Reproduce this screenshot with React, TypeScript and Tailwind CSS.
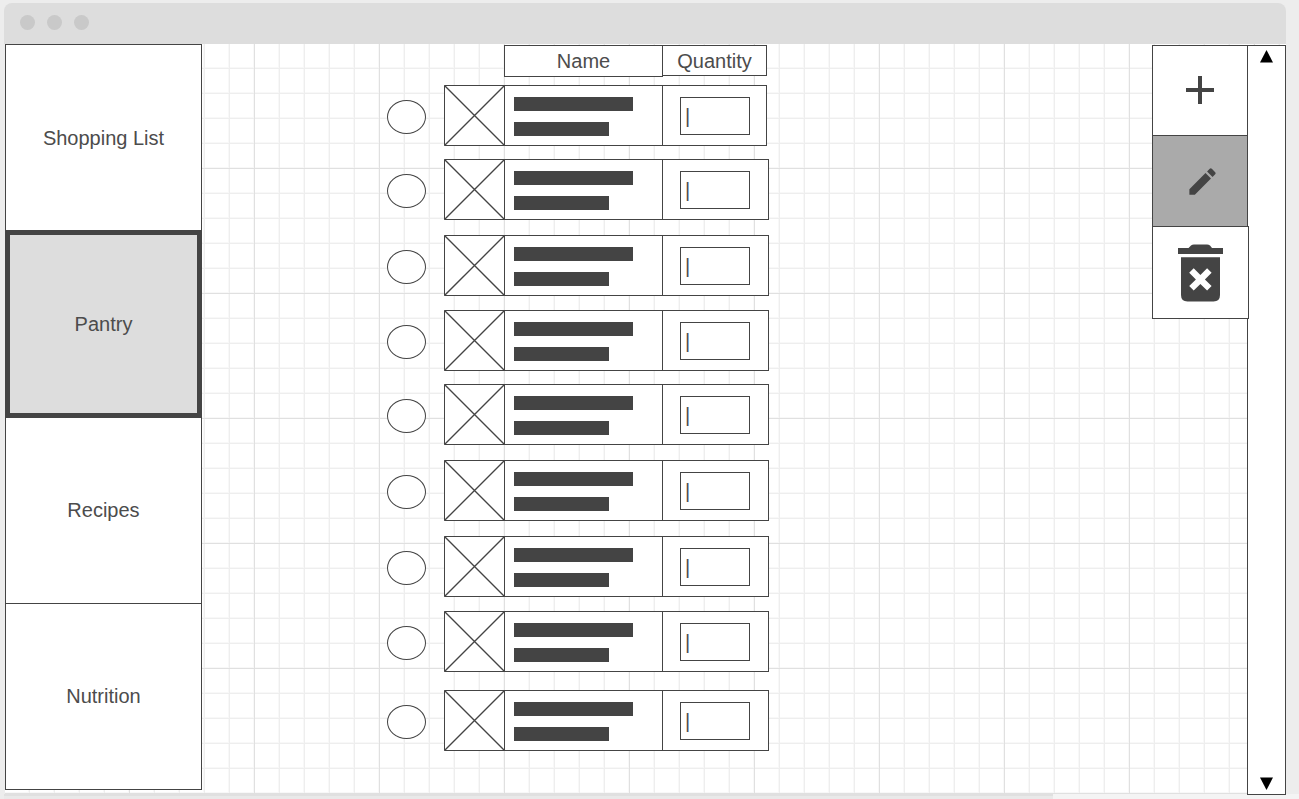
import { MdAdd, MdEdit } from "react-icons/md";

const navItems = ["Shopping List", "Pantry", "Recipes", "Nutrition"];

const rowSpacing = [
  "mt-2",
  "mt-[13px]",
  "mt-[15px]",
  "mt-[14px]",
  "mt-[13px]",
  "mt-[15px]",
  "mt-[15px]",
  "mt-[14px]",
  "mt-[18px]",
];

function TitleBar() {
  return (
    <header className="-ml-px flex h-[41px] items-center gap-3 rounded-t-lg bg-[#ddd] pb-[2px] pl-4">
      <span className="size-[15px] rounded-full bg-[#c9c9c9]" />
      <span className="size-[15px] rounded-full bg-[#c9c9c9]" />
      <span className="size-[15px] rounded-full bg-[#c9c9c9]" />
    </header>
  );
}

function Sidebar() {
  return (
    <nav className="mb-1 grid w-[197px] auto-rows-fr border-b border-[#444]">
      {navItems.map((item) => (
        <button
          key={item}
          type="button"
          className={
            item === "Pantry"
              ? "z-10 -mb-px border-5 border-[#444] bg-[#ddd]"
              : "-mb-px border border-[#444] bg-white"
          }
        >
          {item}
        </button>
      ))}
    </nav>
  );
}

function ImagePlaceholder() {
  return (
    <svg viewBox="0 0 61 61" className="size-[61px] bg-white" fill="none" stroke="#444" aria-hidden="true">
      <path d="M.5.5h60v60H.5z" />
      <path d="M.5.5l60 60M60.5.5l-60 60" strokeWidth="1.4" />
    </svg>
  );
}

function PantryTable() {
  return (
    <table className="ml-[185px] block self-start">
      <thead className="block">
        <tr className="flex items-start pt-px pl-[117px]">
          <th className="h-8 w-[159px] border border-[#444] bg-white text-center leading-[31px] font-normal">Name</th>
          <th className="-ml-px h-[31px] w-[105px] border border-[#444] bg-white text-center leading-[31px] font-normal">
            Quantity
          </th>
        </tr>
      </thead>
      <tbody className="flex flex-col">
        {rowSpacing.map((spacing, i) => (
          <tr key={i} className={`flex h-[61px] ${spacing}`}>
            <td className="w-[57px] pt-[15px]">
              <input
                type="checkbox"
                aria-label={`Select item ${i + 1}`}
                className="block h-[34px] w-[39px] appearance-none rounded-[50%] border border-[#444] bg-white checked:bg-[#aaa]"
              />
            </td>
            <td className="w-[61px]">
              <ImagePlaceholder />
            </td>
            <td className="-ml-px flex w-[159px] flex-col gap-[11px] border border-[#444] bg-white pt-[11px] pl-[9px]">
              <span className="h-[14px] w-[119px] bg-[#444]" />
              <span className="h-[14px] w-[95px] bg-[#444]" />
            </td>
            <td
              className={
                i === 0
                  ? "-ml-px w-[105px] border border-[#444] bg-white pt-[11px] pl-[17px]"
                  : "-ml-px w-[107px] border border-[#444] bg-white pt-[11px] pl-[17px]"
              }
            >
              <input
                type="text"
                defaultValue="|"
                aria-label={`Quantity of item ${i + 1}`}
                className="block h-[38px] w-[70px] border border-[#444] bg-white pl-1"
              />
            </td>
          </tr>
        ))}
      </tbody>
    </table>
  );
}

function TrashIcon() {
  return (
    <svg viewBox="0 0 45 58" className="h-[58px] w-[45px]" fill="#444" aria-hidden="true">
      <path d="M0 4h10.500l2.500-2.400Q14.200 0.500 16 0.500h13q1.800 0 3 1.100L34 4h11v6H0z" />
      <path
        fillRule="evenodd"
        d="M3 13.300h39V51q0 6.500-6.500 6.500h-26Q3 57.500 3 51zM15.700 24.200l-4.500 4.500 6.700 6.700-6.700 6.700 4.500 4.500 6.700-6.700 6.700 6.700 4.500-4.500-6.700-6.700 6.700-6.700-4.500-4.500-6.700 6.700z"
      />
    </svg>
  );
}

function Toolbar() {
  return (
    <div className="mt-px ml-auto flex w-24 flex-col self-start text-[#444]">
      <button
        type="button"
        aria-label="Add item"
        className="flex h-[91px] items-center justify-center border border-[#444] bg-white pb-0.5"
      >
        <MdAdd className="size-12" />
      </button>
      <button
        type="button"
        aria-label="Edit item"
        aria-pressed="true"
        className="-mt-px flex h-[92px] items-center justify-center border border-[#444] bg-[#aaa] pl-1"
      >
        <MdEdit className="size-[35px]" />
      </button>
      <button
        type="button"
        aria-label="Delete item"
        className="z-10 -mt-px -mr-px flex h-[93px] items-center justify-center border border-[#444] bg-white"
      >
        <TrashIcon />
      </button>
    </div>
  );
}

function ScrollRail() {
  return (
    <div className="z-10 mt-px -mb-px -ml-px flex w-[39px] flex-col items-center justify-between border border-[#444] bg-white py-1">
      <button type="button" aria-label="Scroll up">
        <svg viewBox="0 0 13 13" className="size-[13px]" aria-hidden="true">
          <path d="M6.500 0L13 12.500H0z" />
        </svg>
      </button>
      <button type="button" aria-label="Scroll down">
        <svg viewBox="0 0 13 13" className="size-[13px]" aria-hidden="true">
          <path d="M0 .5h13L6.500 13z" />
        </svg>
      </button>
    </div>
  );
}

const gridBackground =
  "bg-[linear-gradient(to_right,transparent_1px,#e0e0e0_1px,#e0e0e0_2px,transparent_2px),linear-gradient(to_bottom,transparent_1px,#e0e0e0_1px,#e0e0e0_2px,transparent_2px),linear-gradient(to_right,#f8f8f8_1px,#eeeeee_1px,#eeeeee_2px,transparent_2px),linear-gradient(to_bottom,#f8f8f8_1px,#eeeeee_1px,#eeeeee_2px,transparent_2px)] bg-[size:125px_125px,125px_125px,25px_25px,25px_25px] bg-[position:-2px_-2px] bg-blend-darken";

export default function App() {
  return (
    <div className="flex min-h-screen flex-col bg-[#ededed] pt-[3px] font-['Liberation_Sans',Arial,sans-serif] text-xl text-[#4c4c4c]">
      <div className="mr-[13px] ml-[5px] flex flex-1 flex-col">
        <TitleBar />
        <main className={`flex flex-1 bg-white ${gridBackground}`}>
          <Sidebar />
          <PantryTable />
          <div className="ml-auto flex">
            <div className="z-20">
              <Toolbar />
            </div>
            <ScrollRail />
          </div>
        </main>
      </div>
      <div className="flex h-[5px] pl-1">
        <div className="flex-[81] border-t-2 border-[#e0e0e0] bg-[#e9e9e9]" />
        <div className="flex-[19] bg-[#f4f4f4]" />
      </div>
    </div>
  );
}
